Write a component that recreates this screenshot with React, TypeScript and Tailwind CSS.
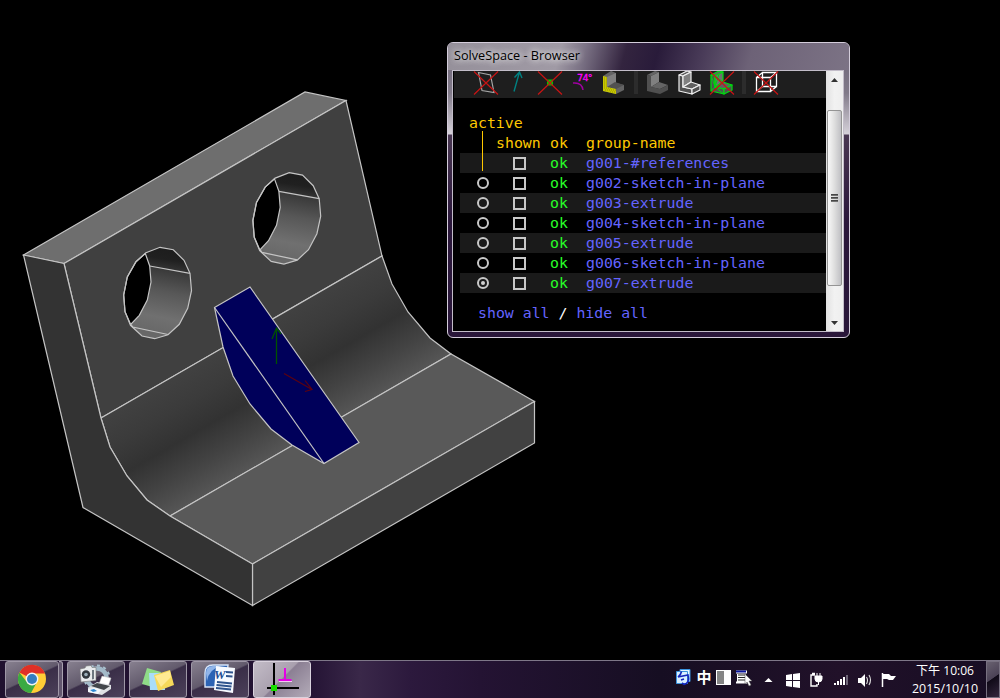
import React from "react";

const HOLE =
  "160,247.3 173.3,249.7 184,260.3 190,273.3 191.5,290.7 187.7,308.3 179.3,324.3 168,334.7 154.7,338.7 142,336 130.5,325.3 125,311.7 123.7,295 127.3,277 136,261.7 146,252.7";

function Hole() {
  return (
    <>
      <polygon points={HOLE} fill="url(#bore)" stroke="none" />
      <polygon points="145.5,253 160,247.3 173.3,249.7 184,260.3 190,273.3 149.7,266" fill="url(#boreTop)" stroke="none" />
      <polygon points="145.3,253.5 149.7,266 151,282 147.3,300 139.3,315.3 130.7,324.5 125,311.7 123.7,295 127.3,277 136,261.7" fill="#000" />
      <path d="M149.7 266 190 273.3M131 324.5l1.7 2.5L168 334.5" />
      <polygon points={HOLE} />
    </>
  );
}

function Model() {
  return (
    <svg className="block h-full w-full" viewBox="0 0 1000 660" fill="none" stroke="#c4c4c4" strokeWidth="1.2">
      <defs>
        <linearGradient id="fillet" gradientUnits="userSpaceOnUse" x1="101" y1="418" x2="160.7" y2="521.4">
          <stop offset="0" stopColor="#414141" />
          <stop offset="0.25" stopColor="#3b3b3b" />
          <stop offset="0.5" stopColor="#323232" />
          <stop offset="0.75" stopColor="#434343" />
          <stop offset="1" stopColor="#565656" />
        </linearGradient>
        <linearGradient id="bore" gradientUnits="userSpaceOnUse" x1="172" y1="269" x2="160" y2="334">
          <stop offset="0" stopColor="#373737" />
          <stop offset="0.35" stopColor="#575757" />
          <stop offset="0.75" stopColor="#707070" />
          <stop offset="1" stopColor="#686868" />
        </linearGradient>
        <linearGradient id="boreTop" gradientUnits="userSpaceOnUse" x1="172" y1="250" x2="169" y2="270">
          <stop offset="0" stopColor="#1d1d1d" />
          <stop offset="0.5" stopColor="#202020" />
          <stop offset="1" stopColor="#343434" />
        </linearGradient>
      </defs>
      <polygon points="23.5,255 64,263.5 346,100.5 305,92" fill="#6e6e6e" />
      <polygon points="64,263.5 346,100.5 382,256 101,418" fill="#404040" />
      <polygon points="101,418 382,256 392,284 408,312 430,338 451,354 170,516 147,500 127,476 110,447" fill="url(#fillet)" />
      <polygon points="170,516 451,354 534.5,401.5 252.5,564" fill="#595959" />
      <polygon points="252.5,564 534.5,401.5 534.5,443 252.5,605.5" fill="#414141" />
      <polygon points="23.5,255 64,263.5 101,418 110,447 127,476 147,500 170,516 252.5,564 252.5,605.5 83,507.5" fill="#333" />
      <Hole />
      <g transform="translate(129.2 -74.6)">
        <Hole />
      </g>
      <polygon points="214.5,307.5 250,287 359,442.5 324,463.5 292,445 271,429 250,404 233,376 223,347" fill="#00005a" />
      <path d="M214.5 307.5 324 463.5" />
      <path d="M276.5 364V328M272 339l4.5-11 4.5 6" stroke="#005200" strokeWidth="1.3" />
      <path d="M284 373.5 312 389.5M305 380.5l7 9-7 2" stroke="#5c0010" strokeWidth="1.2" />
    </svg>
  );
}

function Cross({ x }: { x: number }) {
  return <path d={`M${x} 0.5l24 23M${x + 24} 0.5l-24 23`} stroke="#c81414" strokeWidth="1.2" fill="none" />;
}

function Bracket({ x, front, side, top, line }: { x: number; front: string; side: string; top: string; line: string }) {
  return (
    <g transform={`translate(${x} 0)`} stroke={line} strokeWidth="1.2" strokeLinejoin="round">
      <polygon points="1,4 5,5 5,16 14,18 14,23 1,20" fill={front} />
      <polygon points="1,4 9,0 13,1 5,5" fill={top} />
      <polygon points="5,5 13,1 13,11 5,16" fill={side} />
      <polygon points="5,16 13,11 22,14 14,18" fill={top} />
      <polygon points="14,18 22,14 22,19 14,23" fill={front} />
    </g>
  );
}

function ToolIcons() {
  return (
    <svg className="block h-[27px] w-[372px] bg-[#1e1e1e]" viewBox="454 71 372 27">
      <g transform="translate(0 71)">
        <path d="M478.5 1.5l12 2.5 3.5 17.5-12-2z" fill="none" stroke="#a5a5a5" strokeWidth="1.2" />
        <Cross x={474} />
        <path d="M514 20.5 519.5 1M514.5 6.5l5-5.5 2.5 6" fill="none" stroke="#008080" strokeWidth="1.4" />
        <rect x="547" y="8.5" width="6" height="6" fill="#00c800" />
        <Cross x={538} />
        <text x="577" y="10" fill="#ff00ff" fontSize="9.5" fontFamily="DejaVu Sans, sans-serif" stroke="#ff00ff" strokeWidth="0.3" textLength="15.5">74°</text>
        <path d="M573 12q9-1 10 7" fill="none" stroke="#a000a0" strokeWidth="1.5" />
        <g transform="translate(602 0)">
          <polygon points="1,5 9,0 14,2 14,12 22,14 22,19 14,23 1,20" fill="#646464" />
          <polygon points="5,6 14,2 14,12 5,17" fill="#808080" />
          <polygon points="5,16 13,11 22,14 14,18" fill="#515151" />
          <polygon points="1,5 5,6 5,16 14,18 14,23 1,20" fill="#c8c800" />
          <path d="M2 7h3M2 9h3M2 11h3M2 13h3M2 15h3M2 17h8M3 19h11M8 21h6" stroke="#888000" strokeWidth="0.7" strokeDasharray="1 1" />
        </g>
        <rect x="634" y="0" width="4" height="23" fill="#2c2c2c" />
        <Bracket x={646} front="#505050" side="#808080" top="#656565" line="none" />
        <Bracket x={678} front="#505050" side="#808080" top="#606060" line="#efefef" />
        <Bracket x={710} front="#505050" side="#707070" top="#606060" line="#00dc10" />
        <path d="M711 4l4 12 0-11 8 6-8 5M715 16l9 2 8-4M711 20l4-4M724 23l-9-7M719 3l-4 13" fill="none" stroke="#00d010" />
        <Cross x={710} />
        <rect x="742" y="0" width="4" height="23" fill="#2c2c2c" />
        <path d="M756.5 6.5h14v14h-14zM762.5 1.5h14v14h-14zM756.5 6.5l6-5M770.5 6.5l6-5M756.5 20.5l6-5M770.5 20.5l6-5" fill="none" stroke="#fff" strokeWidth="1.3" />
        <Cross x={754} />
      </g>
    </svg>
  );
}

const GROUPS = [
  "g001-#references",
  "g002-sketch-in-plane",
  "g003-extrude",
  "g004-sketch-in-plane",
  "g005-extrude",
  "g006-sketch-in-plane",
  "g007-extrude",
];

function GroupRow({ name, index }: { name: string; index: number }) {
  return (
    <div className={`ml-[6px] flex h-5 items-center ${index % 2 === 0 ? "bg-[#1a1a1a]" : "bg-black"}`}>
      <div className="flex w-[53px] pl-[17px]">
        {index > 0 && (
          <span className="flex h-3 w-3 items-center justify-center rounded-full border-2 border-[#c8c8c8]">
            {index === 6 && <span className="h-1 w-1 rounded-full bg-[#d0d0d0]" />}
          </span>
        )}
      </div>
      <span className="mt-px h-[13px] w-[13px] border-2 border-[#c8c8c8]" />
      <span className="ml-6 w-9 text-[#28ff28]">ok</span>
      <span className="text-[#6464ff]">{name}</span>
    </div>
  );
}

function Scrollbar() {
  return (
    <div className="flex w-[17px] flex-col items-center bg-gradient-to-r from-[#e2e2e2] via-[#f2f2f2] to-[#eeeeee]">
      <div className="flex h-[39px] pt-[7px]">
        <svg className="h-1 w-[7px]" viewBox="0 0 7 4"><path d="M0 4 3.5 0 7 4z" fill="#333" /></svg>
      </div>
      <div className="flex h-[176px] w-[15px] items-center justify-center rounded-[2px] border border-[#949494] bg-gradient-to-r from-[#f8f8f8] via-[#dedede] to-[#c0c0c4]">
        <div className="flex h-2 w-[7px] flex-col justify-between">
          <i className="h-[2px] bg-gradient-to-b from-[#333] to-[#888]" />
          <i className="h-[2px] bg-gradient-to-b from-[#333] to-[#888]" />
          <i className="h-[2px] bg-gradient-to-b from-[#333] to-[#888]" />
        </div>
      </div>
      <svg className="mt-auto mb-[6px] h-1 w-[7px]" viewBox="0 0 7 4"><path d="M0 0 3.5 4 7 0z" fill="#333" /></svg>
    </div>
  );
}

function BrowserWindow() {
  return (
    <section className="absolute left-[447px] top-[42px] flex h-[296px] w-[403px] flex-col overflow-hidden rounded-[6px] border border-[#d4cddb] bg-[linear-gradient(180deg,#6d6477_0px,#817a89_50px,#d5d1d9_91px,#493752_92px,#2b173b_180px,#2a173a_100%)] pb-[5px] pl-1 pr-[5px]">
      <header className="-ml-1 -mr-[5px] flex h-[27px] shrink-0 bg-[linear-gradient(105deg,#95909a_0%,#a09aa5_28%,#7b7285_34%,#33243f_44%,#291b3a_52%,#493b58_63%,#6d6277_75%,#7c7385_100%)] pl-[6px] pt-[2px]">
        <h1 className="w-[127px] text-black [text-shadow:0_0_6px_#eee,0_0_8px_#ddd]">
          <svg className="block h-5 w-[130px] overflow-visible" viewBox="0 0 130 20">
            <text x="0" y="14.5" textLength="126" lengthAdjust="spacingAndGlyphs" fontFamily="Open Sans, sans-serif" fontSize="13">SolveSpace - Browser</text>
          </svg>
        </h1>
      </header>
      <div className="flex min-h-0 flex-1 border border-[#c3bdc9] bg-black">
        <div className="flex w-[373px] shrink-0 flex-col font-['DejaVu_Sans_Mono',monospace] text-[14.87px] leading-5">
          <div className="flex justify-end"><ToolIcons /></div>
          <div className="pl-px">
            <div className="mt-[15px] pl-[15px] text-[#ffc800]">active</div>
            <div className="relative flex text-[#ffc800]">
              <i className="absolute left-[28px] top-[-2px] h-10 w-px bg-[#ffc800]" />
              <span className="ml-[42px] w-[54px]">shown</span>
              <span className="w-9">ok</span>
              <span>group-name</span>
            </div>
            {GROUPS.map((g, i) => <GroupRow key={g} name={g} index={i} />)}
            <div className="mt-[10px] whitespace-pre pl-6 text-[#6464ff]">show all <span className="text-white">/</span> hide all</div>
          </div>
        </div>
        <Scrollbar />
      </div>
    </section>
  );
}

function TaskButton({ active = false, narrow = false, children }: { active?: boolean; narrow?: boolean; children: React.ReactNode }) {
  return (
    <div className={`flex h-[37px] shrink-0 justify-center rounded-[3px] border ${narrow ? "w-[54px]" : "w-[58px]"} ${active ? "border-[#d9d2dd] bg-[linear-gradient(135deg,#c3bcc7_0%,#a9a0ae_48%,#8b7f93_50%,#b3abb8_100%)]" : "border-[#9e97a6] bg-[linear-gradient(155deg,#87808f_0%,#625a6c_45%,#3a2e48_48%,#4c415a_100%)]"}`}>
      {children}
    </div>
  );
}

function ChromeIcon() {
  return (
    <svg className="mt-[2px] h-[30px] w-[30px] shrink-0" viewBox="0 0 30 30">
      <circle cx="15" cy="15" r="14" fill="#ffcd36" />
      <path d="M15 15 2.5 8.5A14 14 0 0 1 28 9.5H15z" fill="#df3027" />
      <path d="M2.5 8.5A14 14 0 0 0 14 29l6-11-5-3-6 2z" fill="#3aaa43" />
      <circle cx="15" cy="15" r="6.4" fill="#f4f4f4" />
      <circle cx="15" cy="15" r="5" fill="#347dbf" />
    </svg>
  );
}

function CameraIcon() {
  return (
    <svg className="mt-[2px] h-8 w-[34px]" viewBox="0 0 34 32">
      <circle cx="18" cy="14" r="9.5" fill="none" stroke="#a3bac9" strokeWidth="4.5" />
      <circle cx="18" cy="14" r="12.5" fill="none" stroke="#a9c0ce" strokeWidth="2" strokeDasharray="3 3.5" />
      <path d="M1 5l5-1 1-2 5-.5 1 2 4 0v13L2 18z" fill="#e9ebed" stroke="#777" strokeWidth="0.6" />
      <circle cx="7" cy="10.5" r="4.2" fill="#30363c" /><circle cx="7" cy="10.5" r="1.8" fill="#9badb8" />
      <path d="M13 6l2 0v9l-2 .5z" fill="#6d7780" />
      <path d="M20 20l3-8 9 2-3 9z" fill="#fff" stroke="#bbb" strokeWidth="0.5" />
      <path d="M9 24l9-6 14 3v4l-9 6-14-3z" fill="#dfe1e4" />
      <path d="M12 22l6-3 13 3-6 4z" fill="#42464b" />
      <path d="M9 25l8-1 5 2-3 4-10-2z" fill="#f3f8fc" />
      <path d="M11 26l4-1 3 2-4 1z" fill="#2f8ad2" />
    </svg>
  );
}

function NotesIcon() {
  return (
    <svg className="mt-[5px] h-[26px] w-[34px]" viewBox="0 0 34 26">
      <path d="M6 1l14 4-5 16-14-4z" fill="#8fdc88" />
      <path d="M8 6l15 0 1 17-15 0z" fill="#a9ddfa" />
      <path d="M13 8l16-5 4 15-16 6z" fill="#f6d95a" />
      <path d="M14 9l15-5 1 6-10 10z" fill="#ffea92" />
    </svg>
  );
}

function WordIcon() {
  return (
    <svg className="mt-px h-[31px] w-[32px]" viewBox="0 0 32 31">
      <path d="M1 10q0-8 8-8h15l-2 22H1z" fill="#2c63b4" stroke="#d8e5f8" strokeWidth="1.4" />
      <path d="M3 18Q5 6 17 3H9Q2 3 2 10z" fill="#91b5e9" />
      <path d="M12 3l19 2-2 25-19-3z" fill="#f7faff" />
      <path d="M22 9l7 .5M22 13l6.5.5M13 19l15 1.5M12.5 22l15 1.5M12 25l15 1.5" stroke="#2f548d" strokeWidth="1.8" />
      <text x="10" y="16" fill="#1f4e94" fontFamily="Liberation Serif, serif" fontStyle="italic" fontWeight="bold" fontSize="13">W</text>
    </svg>
  );
}

function SolveIcon() {
  return (
    <svg className="mt-px h-[33px] w-[33px]" viewBox="0 0 33 33">
      <path d="M8 0v32M1 25h32" stroke="#000" strokeWidth="2" />
      <path d="M19 5v12M12.5 17h13" stroke="#e500e5" strokeWidth="2" />
      <path d="M13 18.5h13" stroke="#f3c9f3" />
      <rect x="5" y="22" width="6" height="6" fill="#18df00" />
    </svg>
  );
}

function TrayIcons() {
  return (
    <svg className="h-[37px] w-[232px]" viewBox="672 661 232 37">
      <path d="M680 669.5h10v12h-10z" fill="#e8f5ff" stroke="#3b94df" />
      <path d="M676.5 671.5h11v12h-11z" fill="#d8efff" stroke="#3b94df" />
      <path d="M681.5 671.5q-.5 3-3.5 5.5M678 677l10-2q2 8-4 9.5l-2-1.5M681 680l3-1" stroke="#1526bb" fill="none" strokeWidth="1.6" />
      <text x="696.5" y="683" fill="#fff" fontSize="15" fontWeight="bold" fontFamily="Noto Sans CJK SC, sans-serif">中</text>
      <rect x="716" y="670" width="15" height="15" fill="#fff" />
      <rect x="717" y="671" width="7" height="13" fill="#858585" />
      <path d="M736 670.5h11v3h-11zM737 674h9v8h-9zM736 681.5h11v2h-11z" fill="#fff" />
      <path d="M736 671.5h10" stroke="#0a159c" strokeWidth="2" />
      <path d="M738 675h7M738 677.5h7M738 680h7" stroke="#222" />
      <path d="M745 674v10l2-2 2 4 2-1-2-4h3z" fill="#fff" stroke="#555" strokeWidth="0.5" />
      <path d="M764.5 682l4-4 4 4z" fill="#fff" />
      <path d="M786 675l6-1v6h-6zM793 674l7-1v7h-7zM786 681h6v6l-6-1zM793 681h7v7l-7-1z" fill="#fff" />
      <path d="M815 675h-4v11h6v-2M812 673.5h3" fill="none" stroke="#fff" strokeWidth="1.4" />
      <path d="M815 676h7v3q0 3-3.5 3t-3.5-3zM817 673v4M820 673v4M818.5 681v4" fill="#fff" stroke="#fff" />
      <path d="M835 683v2M838 681v4M841 679v6M844 677v8" stroke="#fff" strokeWidth="2" />
      <path d="M847 675v10" stroke="#8b8494" strokeWidth="1.5" />
      <path d="M858 678h3l4-4v13l-4-4h-3z" fill="#fff" />
      <path d="M866.5 677q2 3 0 7M869 675q3 5 0 10" fill="none" stroke="#ddd" strokeWidth="1.1" />
      <path d="M882.5 673v14" stroke="#fff" strokeWidth="1.5" />
      <path d="M883 674h6l2 2h5l-3 4h-4l-2-1h-4z" fill="#fff" />
    </svg>
  );
}

function Taskbar() {
  return (
    <footer className="flex h-[38px] shrink-0 border-t border-[#7e7788] bg-[linear-gradient(90deg,#20112f_0%,#241334_31%,#3a2849_36%,#2c193d_41%,#241333_48%,#160e22_66%,#211129_84%,#170d23_100%)] pl-[5px]">
      <div className="flex gap-1">
        <div className="flex w-[58px]">
          <TaskButton narrow><ChromeIcon /></TaskButton>
          <i className="h-[37px] w-1 shrink-0 rounded-r-[3px] border-y border-r border-[#aaa2b1] bg-[#62566e]" />
        </div>
        <TaskButton><CameraIcon /></TaskButton>
        <TaskButton><NotesIcon /></TaskButton>
        <TaskButton><WordIcon /></TaskButton>
        <TaskButton active><SolveIcon /></TaskButton>
      </div>
      <div className="ml-auto flex text-white">
        <TrayIcons />
        <svg className="h-[37px] w-[82px]" viewBox="0 1 82 37" fill="#fff" fontFamily="Open Sans, Noto Sans CJK SC, sans-serif" fontSize="12">
          <text x="12" y="15" textLength="58" lengthAdjust="spacingAndGlyphs">下午 10:06</text>
          <text x="8" y="33" textLength="66" lengthAdjust="spacingAndGlyphs">2015/10/10</text>
        </svg>
        <i className="h-[37px] w-[14px] border border-[#777080] bg-[linear-gradient(145deg,#696170_0%,#4b4256_46%,#100a18_48%,#33263d_100%)]" />
      </div>
    </footer>
  );
}

export default function App() {
  return (
    <div className="flex h-[698px] w-[1000px] flex-col overflow-hidden bg-black">
      <main className="relative h-[660px] shrink-0">
        <Model />
        <BrowserWindow />
      </main>
      <Taskbar />
    </div>
  );
}
